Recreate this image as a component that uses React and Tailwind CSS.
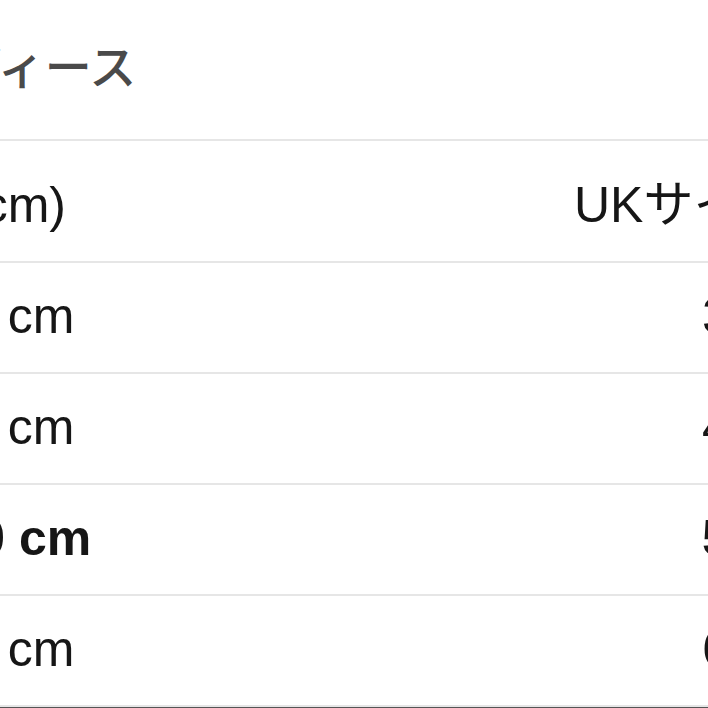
import React from "react";

const rows = [
  { range: "80-84 cm", uk: "32", bold: false },
  { range: "85-86 cm", uk: "43", bold: false },
  { range: "87–90 cm", uk: "54", bold: true },
  { range: "91-94 cm", uk: "65", bold: false },
];

const App = () => {
  return (
    <div className="w-[708px] h-[708px] overflow-hidden bg-white">
      <div
        className="-ml-[93px] h-[139px] pt-[40px] text-[47px] font-medium leading-none text-[#4a4a4a] whitespace-nowrap"
        style={{ fontFamily: '"Noto Sans CJK JP", sans-serif' }}
      >
        レディース
      </div>

      <div
        className="-ml-[134px] w-[1000px] text-[50px] leading-none text-[#161616] whitespace-nowrap"
        style={{ fontFamily: '"Liberation Sans", "Noto Sans CJK JP", sans-serif' }}
      >
        <div className="flex h-[124px] pt-[39px] border-t-2 border-b-2 border-[#e6e6e6]">
          <div className="w-[708px]">胸囲(cm)</div>
          <div>UKサイズ</div>
        </div>

        {rows.map((row) => (
          <div
            key={row.range}
            className={`flex h-[111px] pt-[28px] border-b-2 border-[#e6e6e6] ${
              row.bold ? "font-bold" : ""
            }`}
          >
            <div className="w-[708px]">{row.range}</div>
            <div className="pl-[128px]">{row.uk}</div>
          </div>
        ))}

        <div className="border-t-4 border-[#555]" />
      </div>
    </div>
  );
};

export default App;
